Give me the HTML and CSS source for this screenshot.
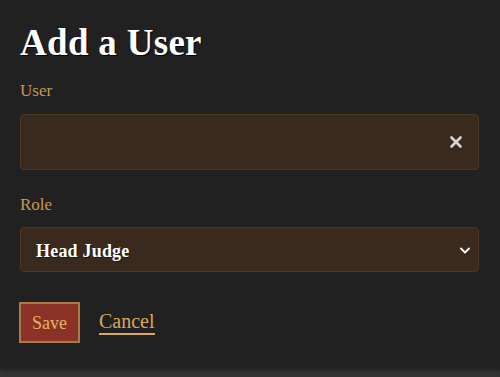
FILE: index.html
```html
<!DOCTYPE html>
<html lang="en">
<head>
<meta charset="utf-8">
<title>Add a User</title>
<link rel="stylesheet" href="styles.css">
</head>
<body>
<main class="dialog">
  <h1 class="title">Add a User</h1>
  <label class="label" for="user">User</label>
  <div class="field field-input">
    <input id="user" class="input" type="text" value="">
    <svg class="clear" width="12" height="12" viewBox="0 0 12 12" aria-hidden="true">
      <path d="M1.5 1.5 L10.5 10.5 M10.5 1.5 L1.5 10.5" stroke="#d6d6d6" stroke-width="2.6" stroke-linecap="round"/>
    </svg>
  </div>
  <div class="label label-role">Role</div>
  <div class="field field-select">
    <span class="select-value">Head Judge</span>
    <svg class="chevron" width="10" height="7" viewBox="0 0 10 7" aria-hidden="true">
      <path d="M1 1.5 L5 5.5 L9 1.5" fill="none" stroke="#ffffff" stroke-width="1.8" stroke-linecap="round" stroke-linejoin="round"/>
    </svg>
  </div>
  <div class="actions">
    <button class="btn-save" type="button">Save</button>
    <a class="cancel" href="#">Cancel</a>
  </div>
</main>
</body>
</html>
```
FILE: styles.css
```css
html, body {
  margin: 0;
  padding: 0;
}
body {
  background: #333333;
  font-family: "Liberation Serif", "DejaVu Serif", serif;
  width: 500px;
  height: 377px;
  overflow: hidden;
}
.dialog {
  background: #212121;
  height: 368px;
  box-sizing: border-box;
  padding: 21px 21px 0 20px;
  display: flex;
  flex-direction: column;
  box-shadow: 0 2px 4px rgba(0,0,0,0.4);
}
.title {
  margin: 0;
  font-size: 37px;
  line-height: 44px;
  font-weight: bold;
  color: #ffffff;
  text-shadow: 1px 1px 0 #000000;
  letter-spacing: 0.3px;
}
.label {
  display: block;
  margin-top: 16px;
  margin-bottom: 13px;
  font-size: 17px;
  line-height: 20px;
  color: #c9984f;
}
.label-role {
  margin-top: 25px;
  margin-bottom: 12px;
}
.field {
  box-sizing: border-box;
  display: flex;
  align-items: center;
  background: #3a2a1d;
  border: 1px solid #4e3722;
  border-radius: 4px;
}
.field-input {
  height: 56px;
  padding: 0 16px 0 14px;
}
.input {
  flex: 1;
  min-width: 0;
  background: transparent;
  border: none;
  outline: none;
  color: #ffffff;
  font-family: inherit;
  font-size: 18px;
}
.clear {
  flex: none;
}
.field-select {
  height: 45px;
  padding: 0 8px 0 15px;
  justify-content: space-between;
}
.select-value {
  font-size: 18px;
  font-weight: bold;
  color: #ffffff;
  text-shadow: 1px 1px 0 rgba(0,0,0,0.5);
  letter-spacing: 0.2px;
  padding-top: 3px;
}
.chevron {
  flex: none;
  margin-top: 1px;
}
.actions {
  margin-top: 30px;
  display: flex;
  align-items: center;
  gap: 19px;
  margin-left: -1px;
}
.btn-save {
  box-sizing: border-box;
  width: 61px;
  height: 41px;
  background: #8a3128;
  border: 2px solid #a67c48;
  color: #e8b462;
  font-family: inherit;
  font-size: 18px;
  padding: 2px 0 0 0;
  cursor: pointer;
}
.cancel {
  color: #d9a85c;
  font-size: 20px;
  text-decoration: none;
  border-bottom: 2px solid #d9a85c;
  line-height: 22px;
  padding-bottom: 1px;
  margin-top: -1px;
}
```
